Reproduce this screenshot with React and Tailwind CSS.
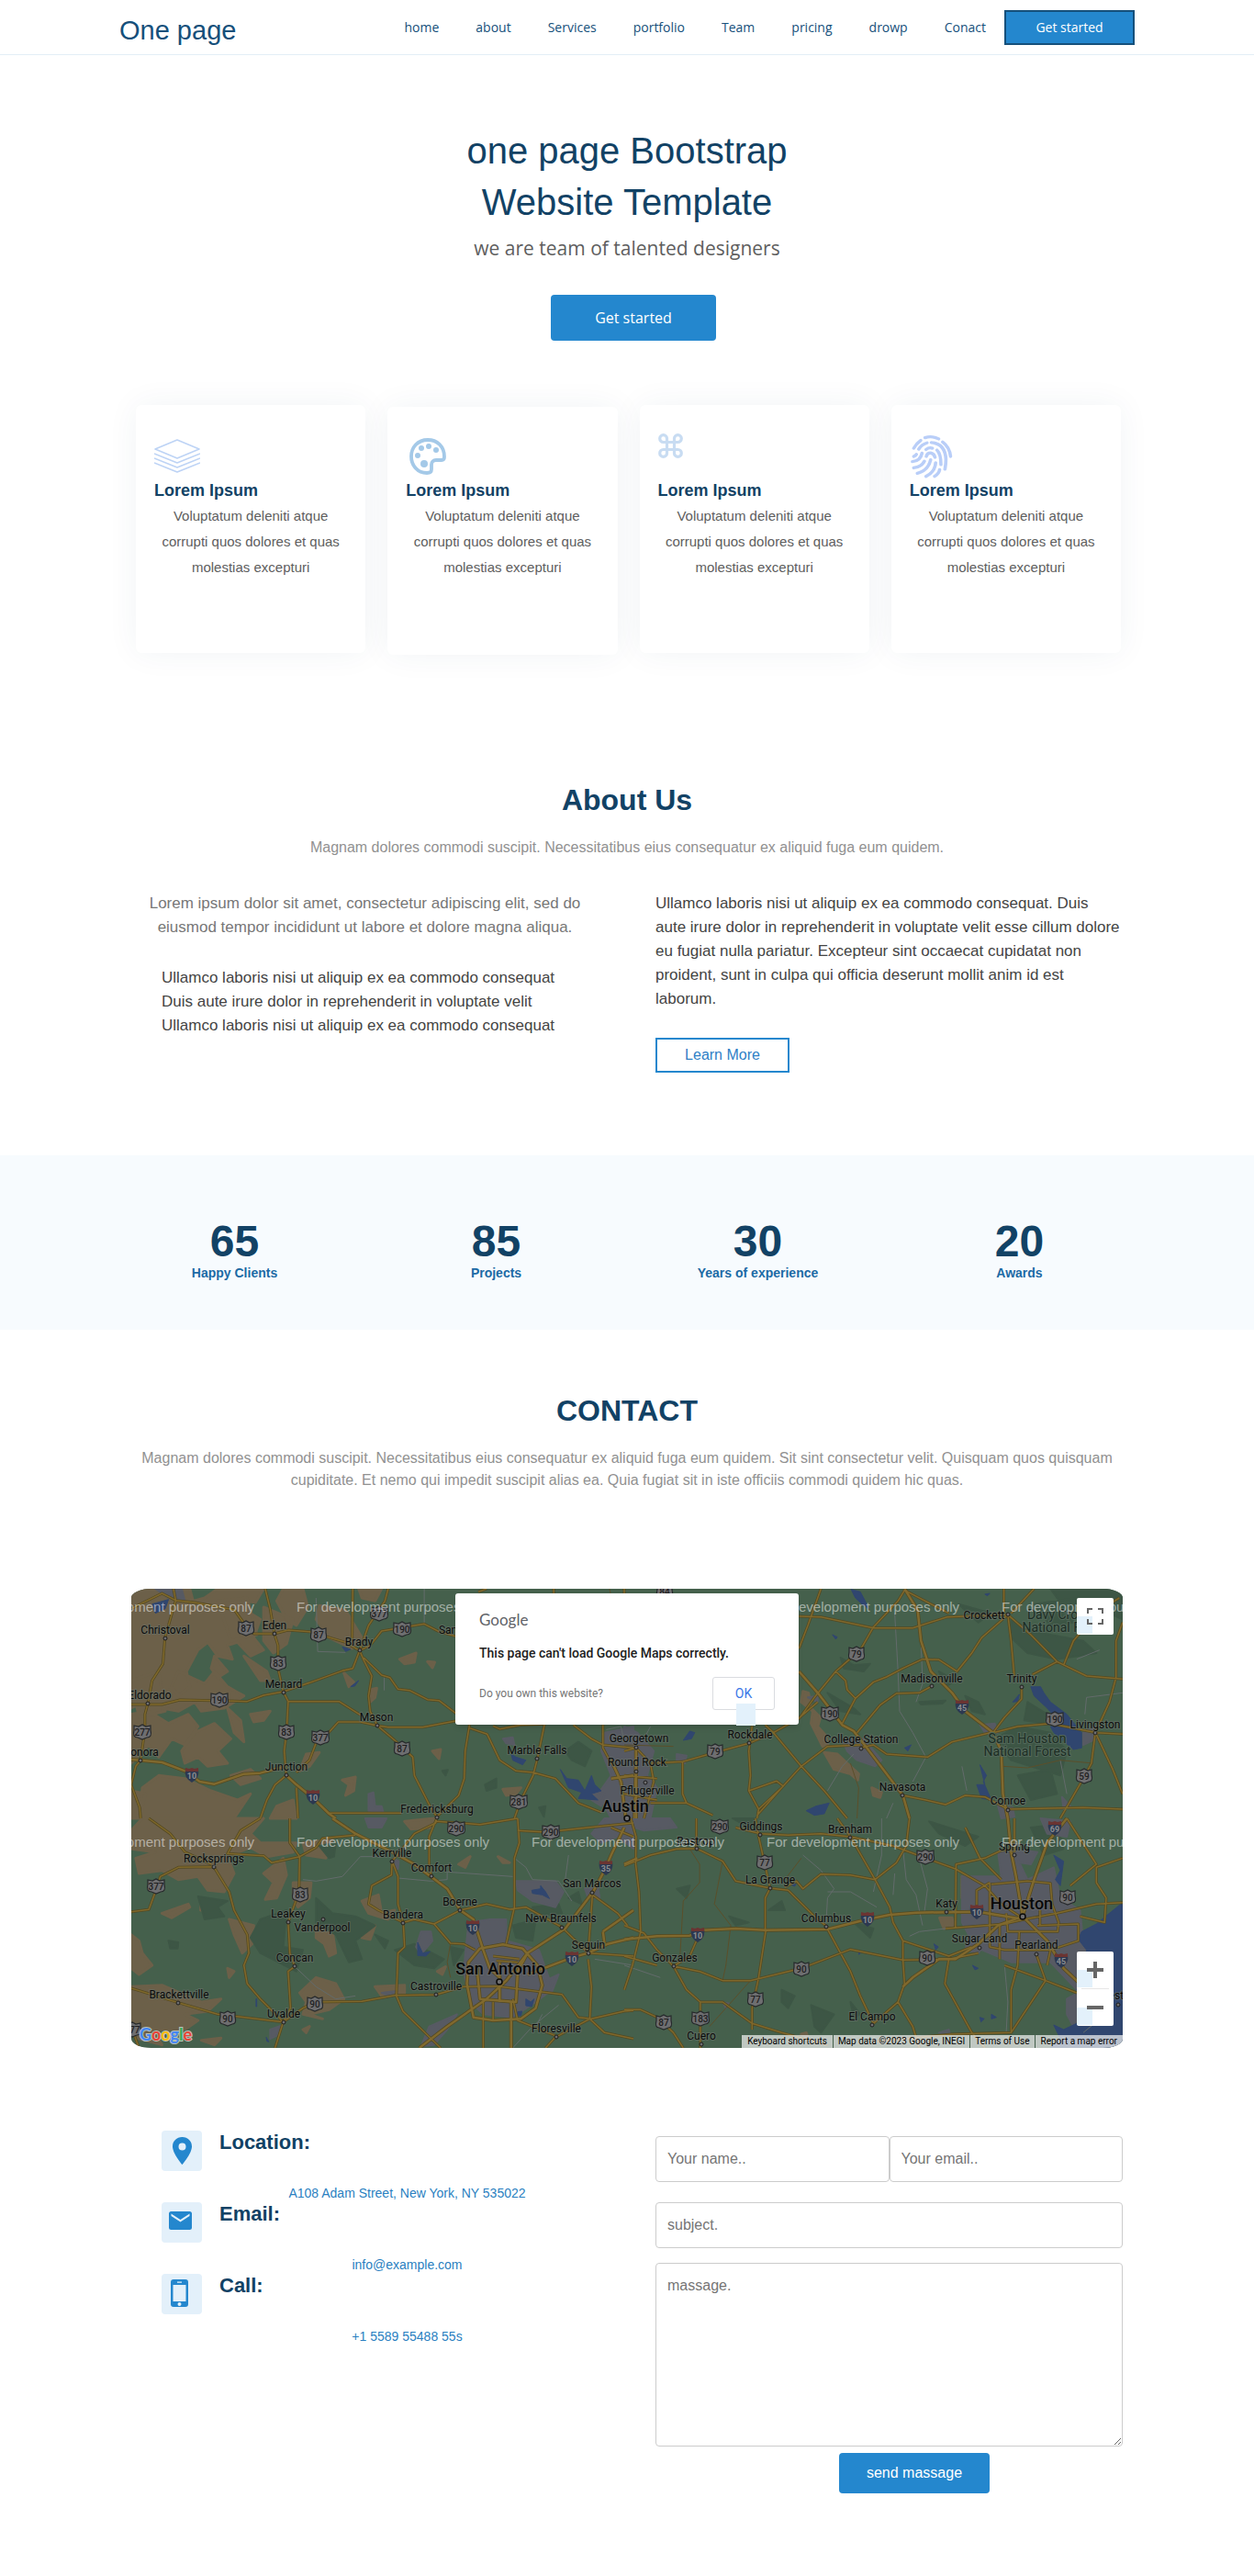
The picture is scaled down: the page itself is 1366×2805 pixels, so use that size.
import React from "react";

const NAV = ["home", "about", "Services", "portfolio", "Team", "pricing", "drowp", "Conact"];

function LayersIcon() {
  return (
    <svg width="50" height="37" viewBox="0 0 50 37" fill="none" stroke="#bdd3f5" strokeWidth="1.6" strokeLinejoin="round" aria-hidden="true">
      <path d="M25 1 L49 11 L25 21 L1 11 Z" />
      <path d="M0 16 L25 26 L50 16" />
      <path d="M0 21 L25 31 L50 21" />
      <path d="M0 26 L25 36 L50 26" />
    </svg>
  );
}

function PaletteIcon() {
  return (
    <svg width="40" height="40" viewBox="0 0 40 40" fill="none" aria-hidden="true">
      <path d="M20 2 C9 2 2 10 2 20 C2 30 9 38 19 38 C22.500 38 24 37 24 34 V29 C24 26 26 24 29 24 H35 C37 24 38 23 38 20.500 C38 9 30 2 20 2 Z" stroke="#a4c9e8" strokeWidth="3.800" strokeLinejoin="round" />
      <g fill="#a4c9e8">
        <circle cx="13" cy="11" r="3" />
        <circle cx="21" cy="9" r="3" />
        <circle cx="29" cy="13" r="3" />
        <circle cx="9" cy="19" r="3" />
        <circle cx="16" cy="28" r="4" />
      </g>
    </svg>
  );
}

function CommandIcon() {
  return (
    <svg width="27" height="27" viewBox="0 0 27 27" fill="none" stroke="#c8dcf2" strokeWidth="3.200" aria-hidden="true">
      <path d="M9.500 9.500 V5.600 A3.900 3.900 0 1 0 5.600 9.500 H21.400 A3.900 3.900 0 1 0 17.500 5.600 V21.400 A3.900 3.900 0 1 0 21.400 17.500 H5.600 A3.900 3.900 0 1 0 9.500 21.400 Z" />
    </svg>
  );
}

function FingerprintIcon() {
  return (
    <svg width="47" height="48" viewBox="870 156 130 146" preserveAspectRatio="none" fill="none" stroke="#b9cef8" strokeWidth="10" strokeLinecap="round" strokeLinejoin="round" aria-hidden="true">
      <path d="M916 167 Q938 160 957 171" />
      <path d="M882 202 Q890 186 903 176" />
      <path d="M969 181 Q990 198 993 229" />
      <path d="M897 205 Q906 189 922 184" />
      <path d="M935 183 Q976 186 979 238 Q979 256 976 271" />
      <path d="M882 229 Q888 226 890 222" />
      <path d="M878 246 Q902 245 907 218" />
      <path d="M919 206 Q929 198 938 202" />
      <path d="M952 208 Q964 220 964 256" />
      <path d="M920 229 Q922 217 933 217 Q943 219 946 232" />
      <path d="M882 267 Q906 263 914 245" />
      <path d="M893 285 Q926 275 933 240" />
      <path d="M919 295 Q946 281 948 250" />
      <path d="M945 295 Q958 286 960 273" />
    </svg>
  );
}

const FEATURES = [
  { icon: <LayersIcon />, box: "pt-[37px]", iconBox: "h-11" },
  { icon: <PaletteIcon />, box: "mt-0.5 pt-[34px]", iconBox: "h-[45px] pl-1" },
  { icon: <CommandIcon />, box: "pt-[31px]", iconBox: "h-[50px]" },
  { icon: <FingerprintIcon />, box: "pt-8", iconBox: "h-[49px]" },
];

const STATS = [
  ["65", "Happy Clients"],
  ["85", "Projects"],
  ["30", "Years of experience"],
  ["20", "Awards"],
];

/* Map drawing: four tiles, each with its own grid. */
const TILES = {
  nw: { x: -13, y: -10 },
  ne: { x: 537, y: -10 },
  sw: { x: -13, y: 250 },
  se: { x: 537, y: 250 },
};
const place = (tile, x, y) => [Math.round(TILES[tile].x + x / 2.8), Math.round(TILES[tile].y + y / 3)];

const TAN = {
  nw: "M36 30H215L225 70L260 60L300 30H440L415 75L390 70L400 110L430 130L410 190L440 230L400 250L360 205L330 215L345 260L300 250L270 205L240 230L205 300L215 350L180 380L160 350L130 400L110 380L36 420ZM500 30H560L575 90L540 150L510 130L480 70ZM440 90L530 130L510 210L470 240L440 200ZM610 85L690 100L740 190L710 225L640 190L600 130ZM730 30H800L780 70L740 60ZM180 300L260 340L290 300L330 350L380 380L320 420L250 430L230 400L180 430L130 420L150 370ZM290 250L330 300L300 320L280 290ZM36 440L90 430L150 470L210 440L240 480L200 540L160 520L120 580L90 540L36 600ZM230 500L290 470L340 520L300 560L330 600L270 610L240 580L200 600L190 560ZM330 420L370 460L380 530L350 500ZM400 440L460 430L440 460L410 465ZM120 640L200 650L280 690L360 720L400 700L350 780H60L70 680ZM36 690L80 700L60 780H36ZM480 740L530 720L540 780H460ZM570 570L610 565L580 610L550 625ZM680 655L720 645L715 690L690 705L700 670ZM685 305L715 335L700 350ZM855 260L905 240L900 270L870 275ZM940 268L962 270L955 288ZM955 560L980 555L975 585ZM1170 685L1225 680L1210 700L1180 705ZM765 360L785 355L780 385L765 400ZM380 250L450 300L460 330L430 330ZM340 640L400 620L430 650L370 670ZM36 330L120 300L140 430L60 450ZM300 70L390 60L420 180L340 200Z",
  ne: "M545 365L562 370L570 420L598 450L590 480L615 510L622 540L605 545L570 470L575 430L540 400ZM610 565L650 570L680 600L715 635L712 655L690 635L640 620ZM755 680L785 695L780 712L760 705Z",
  sw: "M70 0H440L400 50L430 80H540L530 110L450 125L400 95L330 125L350 180L320 240L270 235L240 190L180 200L130 170L60 180L50 130L110 110L36 100V40ZM440 180L500 130L510 185L480 260L445 265L470 210ZM530 210L585 210L580 260L545 290L530 260ZM130 310L210 280L215 290L160 325ZM250 275L265 270L260 300L248 300ZM335 330L410 350L405 410L375 440L350 380ZM600 350L650 370L660 440L640 450L625 410L600 390ZM730 350L780 350L765 395L740 390ZM740 270L790 250L800 310L840 300L820 330L760 310ZM36 380L60 400L70 440L100 480L60 510L36 490ZM36 550L130 545L250 600L310 590L270 630L200 640L240 660L200 690L100 690L130 740L60 720L36 700ZM550 570L600 520L660 540L685 590L640 625L580 640L620 655L560 640L570 600ZM330 490L350 500L335 520ZM560 690L580 680L570 700ZM780 550L870 545L870 570L800 580ZM970 500L995 485L985 510ZM1035 150L1070 125L1055 160ZM1155 125L1190 145L1170 145ZM870 10L960 0L950 30L890 35ZM560 80L650 70L630 130L570 120ZM250 725L310 718L290 740Z",
  se: "M1030 190L1060 210L1045 280L1030 260ZM1085 205L1130 250L1110 265ZM962 325L1000 325L1005 350L975 360ZM1365 400L1380 395L1378 420ZM540 705L555 700L560 715Z",
};

const FOREST = {
  nw: "M1360 560L1400 530L1440 560L1420 610L1380 590ZM985 625L1002 622L995 640ZM1280 745L1300 740L1295 775ZM1115 670L1150 650L1150 680L1120 690Z",
  ne: "M1180 130L1250 170L1400 200L1440 240L1320 260L1230 240L1180 190ZM1130 520L1200 480L1300 500L1350 560L1330 640L1240 610L1180 590ZM1250 80L1380 60L1370 140L1300 150ZM960 300L1010 330L980 350ZM660 255L700 280L750 275L730 300L670 290ZM900 400L980 395L970 405L905 408ZM1200 640L1300 620L1320 700L1240 720ZM1300 30H1520V130L1440 90L1340 90ZM1020 80L1120 110L1080 140ZM1040 380L1080 400L1100 440L1060 430ZM620 370L700 420L720 440L660 430ZM1230 400L1290 440L1280 470L1220 460Z",
  sw: "M240 255L330 270L300 290L320 320L260 330ZM430 330L510 300L500 420L560 430L540 500L430 440L400 390ZM600 260L650 310L720 320L780 350L720 400L740 460L700 470L660 380L600 340ZM150 400L180 405L178 425L155 425ZM780 380L820 400L810 425ZM840 430L900 410L990 460L960 490L900 480ZM1010 420L1050 430L1020 480ZM1200 350L1270 330L1260 400L1210 390ZM610 90L660 80L655 125L640 130ZM1370 260L1400 240L1410 280ZM1260 290L1340 280L1350 310L1270 320Z",
  se: "M700 340L760 360L750 390ZM480 560L520 580L500 620L480 600ZM570 610L640 640L600 700L580 680ZM160 230L200 220L190 260ZM330 0L400 0L380 30ZM930 10L1020 40L1080 60L1040 90L960 50ZM1240 30L1320 20L1340 100L1280 120ZM320 320L380 340L340 350ZM690 600L720 640L700 650ZM440 300L480 270L490 300Z",
};

const URBAN = {
  nw: "M110 30H190L200 70L150 60ZM1480 500L1568 480V780H1500L1460 700L1500 640L1470 560ZM760 700L775 695L780 740L800 740L805 760L760 755ZM1170 520L1200 515L1205 540L1180 535ZM1440 690L1480 700L1470 740L1440 720Z",
  ne: "M0 480L40 500L90 560L70 640L100 680L80 780H0ZM160 570L190 575L185 600L160 595ZM665 525L730 520L785 590L765 610L710 590L680 560ZM1085 475L1130 470L1140 500L1100 500ZM1400 500L1437 480L1440 520L1400 540ZM1140 740L1185 745L1190 775L1150 780ZM1335 710L1360 740L1340 750ZM560 385L590 380L590 400Z",
  sw: "M750 0H815L800 30H760ZM835 130L852 140L850 165L830 160ZM920 370L950 370L955 400L920 445L905 420ZM1065 340L1130 330L1180 330L1180 400L1280 430L1310 520L1320 560L1270 600L1200 650L1110 640L1070 600L1050 500ZM1210 205L1330 205L1355 240L1330 290L1260 270L1215 235ZM1440 50L1480 0H1568V100L1520 60L1470 80ZM1280 540L1340 510L1320 565L1290 560ZM460 690L500 675L480 710L460 720ZM800 570L840 565L830 582ZM945 680L1030 640L1000 690L960 740L920 745ZM1420 230L1460 225L1465 260L1430 260Z",
  se: "M0 0H140L160 30L60 40L0 20ZM1030 190L1150 190L1140 110L1190 110L1230 200L1310 160L1330 260L1390 300L1400 400L1440 480L1380 560L1300 470L1180 470L1070 420L1030 340ZM1050 390L1110 400L1080 440L1040 430ZM1180 100L1260 110L1240 150L1180 140ZM1350 590L1400 560L1390 640L1370 680L1350 640ZM300 600L320 605L310 620ZM960 700L990 690L995 710ZM1270 0L1360 10L1350 60L1290 50Z",
};

const WATER = {
  nw: "M100 80L150 65L140 95L110 110ZM680 220L705 228L690 235ZM705 350L730 330L718 348ZM1195 570L1210 580L1240 590L1230 605L1200 590ZM1345 620L1365 650L1400 655L1420 690L1440 640L1450 670L1470 690L1440 700L1460 720L1400 715L1410 695L1370 680Z",
  ne: "M692 32L720 40L735 70L745 95L725 80L705 60ZM635 180L650 188L645 195ZM180 525L200 495L215 500L205 520ZM1240 350L1270 350L1280 370L1300 400L1325 420L1350 440L1395 500L1395 550L1370 555L1310 500L1300 480L1340 480L1290 420L1250 380ZM1185 400L1205 375L1200 398ZM1085 605L1105 640L1095 660L1120 720L1090 715L1075 670L1100 670ZM555 755L585 740L625 730L610 765L580 770ZM855 550L875 540L865 560ZM1100 48L1115 45L1108 53Z",
  sw: "M910 405L925 440L948 435L935 450L910 448ZM1258 235L1285 230L1285 220L1300 240L1312 262L1290 250L1260 245ZM1240 590L1255 600L1265 590L1258 615L1240 612ZM1215 632L1228 630L1225 645L1215 645ZM417 590L419 590V615L417 615ZM448 715L456 730L450 728Z",
  se: "M1520 275L1480 310L1440 345L1395 370L1385 395L1410 430L1400 500L1380 560L1420 620L1440 660L1380 670L1340 690L1310 675L1330 720L1300 750H1520ZM1310 120L1340 140L1330 220L1315 200L1330 170ZM1062 480L1080 490L1070 495ZM1120 640L1135 650L1120 655ZM1085 650L1098 655L1088 665ZM945 410L958 420L950 430ZM505 215L525 210L520 222ZM715 435L722 437L716 445Z",
};

const ROADS = {
  nw: "M36 408H130L185 393L390 398L440 378L500 366M500 366L515 398H670L735 442M445 30L460 95L473 178L484 215V290L500 366M36 95L130 45L172 68L230 75L350 98L385 150L410 177H473L515 165L580 170L690 205L733 232M165 30L172 68L139 190L133 275L100 330L87 405L78 440V490L65 590M36 670L50 610L65 590M36 670L62 745L65 780M509 640L475 670L450 720L430 780M515 398L510 500L503 560L509 640M540 680L545 780M640 763H860M733 232L712 290L680 298L580 337L500 366M733 232L745 262L770 315L760 380L765 430L787 477M745 255L800 312L825 320L850 358L885 362L940 392L975 395L1030 440M712 30L710 200M820 30L810 70L760 150L733 232L765 215L800 168L930 145L975 170L1025 185M787 477L735 465H668L640 498L605 520L580 590L540 630M787 477L820 482H925L1025 462M787 477L840 525L895 580L900 640L945 735L968 775M1068 475L1055 560L1052 650L1035 705L968 775M1068 485L1122 505L1160 590L1210 625L1262 630L1330 650L1400 730L1470 760M1297 472L1275 585L1262 640L1225 720L1205 780M1140 478L1160 488L1225 475L1300 472M1385 475L1440 520L1475 540L1568 550M1475 475V550L1500 600M1095 40L1120 30M1325 30V45M1540 30V60",
  ne: "M855 35L835 70L760 155L720 230L645 300L580 385L533 455M533 120L600 122L760 158H880L985 122L1170 115M910 260L960 262L1015 300L1060 240L1090 190L1170 115M910 260L850 290L800 318L760 335L705 388M645 300L675 330L680 360L705 388L665 470M938 348L900 370L830 372L780 410L710 500M178 595L260 570L380 535L455 500L530 455L590 400M390 478L380 560L385 640L380 690L410 750L405 780M430 475L455 500L540 610L610 690L680 780M380 690L465 658L485 675L410 750M405 770L480 680L540 610L620 545L720 540M720 550L760 540L800 570L925 580L1000 530L1125 498M1125 500L1200 480L1300 470L1440 500L1520 505M1125 500L1160 450L1212 390V350M1170 115L1180 200L1190 320M1170 115L1240 180L1320 268L1410 315L1520 325M1245 310L1320 268M1340 280L1370 200L1450 100L1510 60M1520 140L1500 200L1500 320L1480 400L1437 500L1425 600L1400 650L1330 780M1437 500L1490 620L1520 700M1170 750L1400 745L1520 750M850 705L920 720L980 735L1040 705L1100 710L1170 750M0 640L100 650M36 550L80 600L178 595L178 700L190 730L270 770M80 730H190M36 550L30 780M80 600L90 660L60 780M533 225L560 150L600 30M1158 30V110M0 560L36 550M855 35L990 110M1250 30L1180 110M0 700L100 720",
  sw: "M36 555L180 602L300 640L500 665L560 620L600 600L740 598L840 578L966 576L1050 550L1150 548L1350 575M36 305L90 298L110 240L125 190L180 160L288 158M90 0L155 50L200 110L280 150M288 158L335 240L350 300L390 380L395 440L380 480L390 540L430 590L500 665M430 0L370 40L330 115L440 122L465 145L550 125L600 95L620 65L720 55M520 0V80L550 125L548 240L515 340L520 440L535 484L515 500L522 620L500 665L475 750M968 0L965 15L900 50L832 140M832 140L830 185L770 220L760 280L790 300L866 340L900 330L960 345L1040 300M832 140L850 190V280L866 340L870 420L850 440L845 580L865 630L980 750M968 0L945 60V150L952 190M968 10L1100 20L1215 0M1215 40L1300 45L1430 30L1568 15M1215 0L1220 80L1205 130L1205 290L1180 410M1040 300L1120 280L1190 297L1240 290L1349 355M960 345L1010 408L1050 410L1085 430M1200 590L1215 660L1330 710M1110 600V750M1140 600V660M1350 575L1400 650L1440 655L1540 630L1568 628M1430 460L1440 550L1435 655L1480 700L1568 720M1443 250L1430 440M1443 250L1520 310L1550 350M1140 450L1220 460M1150 465L1215 470M1349 355L1430 440L1568 450M1300 750L1330 715L1435 655M36 680L60 750M1568 60L1500 30",
  se: "M0 155L80 120L160 100L220 98L300 140L340 205L445 228L500 235L580 320L620 355M0 350L60 375L100 430L150 483M150 483L230 500L300 530H385L540 490L690 428L850 463L990 460M20 0L36 60L35 150L45 240L50 370L25 480L0 560M430 365V260L445 228L435 180L410 60L400 0M432 365L410 520L390 620V690M150 483L190 560L232 600H300L390 670L480 700L620 740M232 600V750M0 625H50L100 650L150 700L180 750M620 362L690 500L720 580L760 670M220 0V98M220 400L200 450L150 483M340 30L415 50L500 55L600 50L690 60L820 90L945 140L1010 165L1100 220L1150 280L1220 330M650 0L690 60L765 200L810 290L820 340L850 400V460L855 540L835 600L760 670M490 225L525 205L545 230L600 182L690 185L765 200L830 145L860 90L870 0M1120 215L1230 205L1300 212L1305 280L1325 340L1322 370H1170L1165 310M1010 360L1012 150L1100 130L1150 105L1190 100M1040 30L1085 130L1150 200M980 360L1160 345L1220 330L1320 310L1440 280L1520 275M1115 210V420L1160 430H1300L1385 400V345L1260 350M1205 370L1200 480L1180 560V700M1257 445L1285 530L1180 700L1000 705L760 730M990 460L978 540L1060 700L1100 750M990 460L1080 440M1160 480L1285 530L1380 570M1520 130L1440 160V210L1470 260L1465 340L1390 320M835 600L880 680L900 750M1350 0L1440 150L1360 220M1300 430L1290 480M1075 300V235L1115 210M1145 350V460M1268 300V350M1190 0V110M850 400L990 450L1060 420M0 450L100 480",
};

const HIGHWAYS = {
  nw: "M36 588L65 590L130 597L200 625L245 660L290 668L380 635L430 632L509 610M509 640L540 670L592 715L640 765L660 780M1500 590L1530 660L1545 780M1500 650L1568 640",
  ne: "M855 30L895 100L905 200L935 300L1000 370L1040 430L1125 500L1150 560L1155 700L1170 780M533 300L590 370L665 475L700 495L740 550L850 705L870 780M36 550V780",
  sw: "M650 0L720 50L832 110L900 150L950 190L1000 230L1040 300L1080 330L1110 430M1060 540L1065 470L1100 425L1170 412L1230 425L1275 480L1290 545L1270 620L1225 655L1140 660L1080 650ZM1110 430L1130 490L1160 520M1090 480L1100 590L1210 600L1215 500L1245 440M915 750L1000 680L1120 590L1180 530L1245 440L1360 360L1445 240L1480 170L1500 120L1540 30M1245 510L1380 455L1430 440L1490 410L1568 390M1195 600V750M1475 370L1568 300M1475 370L1480 410M1160 470V600",
  se: "M0 395L100 385L200 383L240 365L340 360L430 365L620 362L740 330L810 315L890 308L1080 305L1220 330M1170 0L1180 110L1195 190L1215 320L1290 400L1340 490L1390 540M1350 0L1290 80L1250 200L1215 320M850 550L880 520L960 460H1010L1080 410L1140 350L1215 320M0 150L40 130",
};

const LANES = {
  nw: "M600 60L605 235L690 238M930 30V145M808 320V362M1485 490L1530 480L1540 530",
  ne: "M825 110L835 300L840 430L880 500L920 580L880 660M905 200L910 340L890 400M1030 610L1045 690M1330 590L1350 700M1520 370L1410 385L1405 440M620 690L665 610L700 570M80 480L60 520M800 780L820 730M1380 260L1450 230",
  sw: "M560 200L600 205L680 190L735 125L800 125M850 195L950 205L1000 200V175L1200 190M535 484L600 550L660 590L720 580M1205 130L1240 160L1260 200L1340 205L1380 270M1200 750L1260 680L1340 610M1360 200L1370 120M1450 460L1568 480M1290 640L1260 700",
  se: "M545 120L600 170L640 230L620 260L615 355M620 240L690 240L770 290M785 0V120L760 240M850 100L860 200L890 250L910 350M900 130L925 230L915 310M870 385L900 370L980 360M820 250L825 180M1160 480L1170 600L1165 700M0 480L110 520M1480 630L1400 700",
};

const BYWAYS = {
  nw: "M1495 30L1510 100",
  ne: "M1155 610L1230 615L1330 590L1430 600M690 600L715 680L710 780M0 540L150 545",
  sw: "M1010 410L1000 470L1010 520",
  se: "M200 100L230 150V210L180 270L170 450M300 140L275 280L325 350L310 480L300 530M385 530L260 680M490 200L540 130",
};

const TOWNS = [
  ["nw", "Christoval", 139, 178, 139, 191], ["nw", "Eden", 474, 163, 473, 177], ["nw", "Brady", 731, 217, 733, 232],
  ["nw", "Menard", 502, 355, 501, 369], ["nw", "Eldorado", 92, 391, 87, 405], ["nw", "Mason", 785, 463, 787, 477],
  ["nw", "Sonora", 68, 577, 64, 591], ["nw", "Junction", 510, 625, 509, 640], ["nw", "Marble Falls", 1273, 571, 1274, 585],
  ["nw", "Fredericksburg", 968, 763, 968, 778], ["nw", "San Saba", 1045, 178, 1045, 190],
  ["ne", "Georgetown", 45, 532, 36, 549], ["ne", "Round Rock", 38, 610, 36, 627], ["ne", "Rockdale", 383, 520, 380, 535],
  ["ne", "Pflugerville", 70, 703, 64, 663], ["ne", "College Station", 723, 535, 722, 552], ["ne", "Madisonville", 937, 335, 938, 349],
  ["ne", "Crockett", 1098, 128, 1170, 115], ["ne", "Trinity", 1211, 337, 1212, 351], ["ne", "Livingston", 1435, 487, 1437, 500],
  ["ne", "Navasota", 847, 691, 849, 705], ["ne", "Conroe", 1170, 736, 1170, 753],
  ["sw", "Rocksprings", 288, 145, 288, 159], ["sw", "Kerrville", 832, 127, 832, 141], ["sw", "Comfort", 951, 175, 952, 189],
  ["sw", "Boerne", 1040, 286, 1038, 300], ["sw", "Leakey", 514, 325, 515, 339], ["sw", "Vanderpool", 620, 370, 621, 330],
  ["sw", "Bandera", 865, 328, 866, 342], ["sw", "Concan", 535, 469, 535, 484], ["sw", "Castroville", 966, 562, 966, 577],
  ["sw", "Brackettville", 181, 589, 179, 603], ["sw", "Uvalde", 501, 652, 501, 666], ["sw", "Floresville", 1332, 700, 1332, 715],
  ["sw", "San Marcos", 1443, 226, 1442, 243], ["sw", "New Braunfels", 1348, 340, 1349, 357], ["sw", "Seguin", 1430, 427, 1430, 441],
  ["se", "Giddings", 416, 40, 415, 54], ["se", "Bastrop", 219, 86, 221, 99], ["se", "Brenham", 688, 49, 689, 63],
  ["se", "La Grange", 445, 214, 445, 229], ["se", "Columbus", 615, 340, 616, 355], ["se", "Gonzales", 153, 469, 151, 483],
  ["se", "Cuero", 234, 724, 235, 738], ["se", "El Campo", 755, 661, 756, 675], ["se", "Katy", 982, 292, 982, 306],
  ["se", "Sugar Land", 1083, 406, 1083, 424], ["se", "Pearland", 1256, 427, 1257, 444], ["se", "Spring", 1190, 104, 1190, 121],
  ["se", "Galveston", 1488, 590, 1506, 610],
];

const CITIES = [
  ["ne", "Austin", 4, 758, 8, 780],
  ["sw", "San Antonio", 1162, 511, 1160, 533],
  ["se", "Houston", 1213, 298, 1214, 320],
];

const PARKS = [
  ["ne", "Davy Crockett", 1350, 130], ["ne", "National Forest", 1347, 172],
  ["ne", "Sam Houston", 1230, 535], ["ne", "National Forest", 1230, 577],
];

const SHIELDS = [
  ["nw", "87", 387, 160], ["nw", "87", 607, 180], ["nw", "377", 793, 110], ["nw", "190", 863, 162], ["nw", "83", 483, 274],
  ["nw", "190", 306, 392], ["nw", "277", 71, 497], ["nw", "83", 510, 497], ["nw", "377", 614, 516], ["nw", "87", 862, 551],
  ["nw", "281", 1219, 725], ["ne", "84", 122, 38], ["ne", "79", 707, 242], ["ne", "190", 628, 438], ["ne", "79", 278, 560],
  ["ne", "190", 1314, 455], ["ne", "59", 1404, 641], ["sw", "290", 1028, 32], ["sw", "290", 1317, 44], ["sw", "377", 113, 221],
  ["sw", "83", 552, 250], ["sw", "90", 597, 606], ["sw", "90", 329, 653], ["sw", "277", 40, 690], ["se", "290", 292, 26],
  ["se", "77", 427, 143], ["se", "290", 917, 126], ["se", "90", 1351, 258], ["se", "90", 541, 492], ["se", "90", 925, 456],
  ["se", "77", 399, 592], ["se", "87", 121, 667], ["se", "183", 231, 655],
];

const INTERSTATES = [
  ["nw", "10", 220, 640], ["nw", "10", 592, 712], ["ne", "45", 1029, 416], ["sw", "10", 1079, 358], ["sw", "35", 1483, 163],
  ["sw", "10", 1379, 458], ["se", "10", 223, 380], ["se", "10", 743, 331], ["se", "10", 1074, 307], ["se", "69", 1314, 34], ["se", "45", 1334, 466],
];

function Layer({ paths, ...style }) {
  return Object.entries(paths).map(([tile, d]) => (
    <g key={tile} transform={`translate(${TILES[tile].x} ${TILES[tile].y}) scale(0.35714 0.33333)`}>
      <path d={d} vectorEffect="non-scaling-stroke" strokeLinejoin="round" {...style} />
    </g>
  ));
}

function MapDrawing() {
  return (
    <svg className="absolute inset-0 h-full w-full font-[Roboto,sans-serif]" viewBox="0 0 1080 500" preserveAspectRatio="xMidYMid slice" role="img" aria-label="Map of central Texas">
      <rect width="1080" height="500" fill="#45604c" />
      <Layer paths={TAN} fill="#6c6049" stroke="#6c6049" strokeWidth="3" />
      <Layer paths={FOREST} fill="#3d5645" stroke="#3d5645" strokeWidth="2" />
      <Layer paths={URBAN} fill="#575a63" stroke="#575a63" strokeWidth="2" />
      <Layer paths={WATER} fill="#30466f" stroke="#30466f" strokeWidth="1" />
      <Layer paths={LANES} fill="none" stroke="#636b6b" strokeWidth="1" />
      <Layer paths={BYWAYS} fill="none" stroke="#5b4f2a" strokeWidth="1" />
      <Layer paths={ROADS} fill="none" stroke="#544920" strokeWidth="3" />
      <Layer paths={HIGHWAYS} fill="none" stroke="#544920" strokeWidth="4" />
      <Layer paths={ROADS} fill="none" stroke="#7f682c" strokeWidth="1.500" />
      <Layer paths={HIGHWAYS} fill="none" stroke="#80692e" strokeWidth="2.500" />

      {SHIELDS.map(([tile, text, x, y]) => {
        const [cx, cy] = place(tile, x, y);
        const w = text.length > 2 ? 10 : 9;
        return (
          <g key={tile + text + x}>
            <path d={`M${cx - w + 1} ${cy - 7} L${cx - 4} ${cy - 6} L${cx} ${cy - 8} L${cx + 4} ${cy - 6} L${cx + w - 1} ${cy - 7} L${cx + w - 1} ${cy - 2} Q${cx + w + 1} ${cy + 6} ${cx + 5} ${cy + 6} L${cx} ${cy + 8} L${cx - 5} ${cy + 6} Q${cx - w - 1} ${cy + 6} ${cx - w + 1} ${cy - 2} Z`} fill="#6e6e70" stroke="#26292b" strokeWidth="1.200" />
            <text x={cx} y={cy + 4} textAnchor="middle" fontSize="10" fontWeight="500" fill="#1f2021">{text}</text>
          </g>
        );
      })}
      {INTERSTATES.map(([tile, text, x, y]) => {
        const [cx, cy] = place(tile, x, y);
        return (
          <g key={tile + text + x}>
            <path d={`M${cx - 7} ${cy - 7} H${cx + 7} Q${cx + 9} ${cy + 3} ${cx} ${cy + 8} Q${cx - 9} ${cy + 3} ${cx - 7} ${cy - 7} Z`} fill="#2c3850" />
            <path d={`M${cx - 7} ${cy - 4} V${cy - 8} L${cx - 3} ${cy - 7} L${cx} ${cy - 8} L${cx + 3} ${cy - 7} L${cx + 7} ${cy - 8} V${cy - 4} Z`} fill="#6b3432" />
            <text x={cx} y={cy + 4} textAnchor="middle" fontSize="9" fontWeight="700" fill="#8b8d90">{text}</text>
          </g>
        );
      })}

      {PARKS.map(([tile, text, x, y]) => {
        const [px, py] = place(tile, x, y);
        return <text key={text + y} x={px} y={py} textAnchor="middle" fontSize="14" fill="#1c2d24" stroke="#53685a" strokeWidth="2" paintOrder="stroke">{text}</text>;
      })}
      {TOWNS.map(([tile, text, x, y, dx, dy]) => {
        const [px, py] = place(tile, x, y);
        const [cx, cy] = place(tile, dx, dy);
        return (
          <g key={text}>
            <circle cx={cx} cy={cy} r="2" fill="#6e6e70" stroke="#1d1d1d" />
            <text x={px} y={py} textAnchor="middle" fontSize="12" fill="#0b0b0b" stroke="#68716a" strokeOpacity="0.600" strokeWidth="2" paintOrder="stroke">{text}</text>
          </g>
        );
      })}
      {CITIES.map(([tile, text, x, y, dx, dy]) => {
        const [px, py] = place(tile, x, y);
        const [cx, cy] = place(tile, dx, dy);
        return (
          <g key={text}>
            <circle cx={cx} cy={cy} r="3" fill="#6e6e70" stroke="#0b0b0b" strokeWidth="1.500" />
            <text x={px} y={py} textAnchor="middle" fontSize="18" fontWeight="500" fill="#080808" stroke="#6e7070" strokeOpacity="0.600" strokeWidth="2" paintOrder="stroke">{text}</text>
          </g>
        );
      })}
      {[25, 281].map((y) =>
        [-76, 180, 436, 692, 948].map((x) => (
          <text key={`${x} ${y}`} x={x} y={y} fontSize="15" fill="#ffffff" fillOpacity="0.500" className="font-['Liberation_Sans',Arial,sans-serif]">
            For development purposes only
          </text>
        ))
      )}
      <text x="9" y="492" fontSize="18" fontWeight="700" stroke="#b9c2bb" strokeWidth="2" paintOrder="stroke" className="font-[Lato,sans-serif]">
        <tspan fill="#4285f4">G</tspan><tspan fill="#ea4335">o</tspan><tspan fill="#fbbc05">o</tspan><tspan fill="#4285f4">g</tspan><tspan fill="#34a853">l</tspan><tspan fill="#ea4335">e</tspan>
      </text>
    </svg>
  );
}

function MapPanel() {
  return (
    <div className="relative mx-auto h-[500px] w-full max-w-[1080px] overflow-hidden rounded-[2%] font-[Roboto,sans-serif]">
      <MapDrawing />
      <div className="absolute left-1/2 top-[5px] h-[143px] w-[374px] -translate-x-1/2 rounded-[3px] bg-white px-[26px] pt-[19px] shadow-md">
        <p className="font-[Lato,sans-serif] text-[17px] leading-5 text-[#5f6368]">Google</p>
        <p className="mt-4 text-sm font-medium leading-5 text-[#212121]">This page can't load Google Maps correctly.</p>
        <div className="mt-4 flex items-center justify-between">
          <a href="#map" className="text-xs text-[#757575]">Do you own this website?</a>
          <button type="button" className="relative h-9 w-[68px] rounded-[3px] border border-[#dadce0] text-sm text-[#3b78e7]">
            OK
            <span className="absolute left-[25px] top-7 h-6 w-[21px] bg-[#e3f1fb]" />
          </button>
        </div>
      </div>
      <button type="button" aria-label="Toggle fullscreen view" className="absolute right-2.5 top-2.5 grid h-10 w-10 place-items-center rounded-xs bg-white">
        <span className="absolute bottom-px left-0 h-[19px] w-[17px] bg-[#e3f1fb]" />
        <svg className="relative" width="18" height="18" viewBox="0 0 18 18" fill="none" stroke="#666" strokeWidth="2" aria-hidden="true">
          <path d="M1 6V1H6M12 1H17V6M17 12V17H12M6 17H1V12" />
        </svg>
      </button>
      <div className="absolute bottom-6 right-2.5 flex w-10 flex-col items-center rounded-xs bg-white">
        <button type="button" aria-label="Zoom in" className="relative grid h-10 w-10 place-items-center">
          <span className="absolute bottom-px left-0 h-[19px] w-[17px] bg-[#e3f1fb]" />
          <svg className="relative" width="18" height="18" viewBox="0 0 18 18" fill="#666" aria-hidden="true"><path d="M7 0H11V7H18V11H11V18H7V11H0V7H7Z" /></svg>
        </button>
        <span className="h-px w-[30px] bg-[#e6e6e6]" />
        <button type="button" aria-label="Zoom out" className="relative grid h-10 w-10 place-items-center">
          <span className="absolute bottom-px left-0 h-[19px] w-[17px] bg-[#e3f1fb]" />
          <svg className="relative" width="18" height="18" viewBox="0 0 18 18" fill="#666" aria-hidden="true"><path d="M0 7H18V11H0Z" /></svg>
        </button>
      </div>
      <div className="absolute bottom-0 right-0 flex h-3.5 gap-px text-[10px] leading-[14px] text-black">
        <button type="button" className="bg-[#f5f5f5]/70 px-1.5">Keyboard shortcuts</button>
        <span className="bg-[#f5f5f5]/70 px-[5px]">Map data ©2023 Google, INEGI</span>
        <a href="#terms" className="bg-[#f5f5f5]/70 px-[5px]">Terms of Use</a>
        <a href="#report" className="bg-[#f5f5f5]/70 px-1.5">Report a map error</a>
      </div>
    </div>
  );
}

const CONTACTS = [
  {
    title: "Location:", text: "A108 Adam Street, New York, NY 535022",
    icon: <path d="M22.500 7C16.500 7 12 11.300 12 17.200C12 25 22.500 37 22.500 37S33 25 33 17.200C33 11.300 28.500 7 22.500 7ZM22.500 13.500A4 4 0 1 1 22.500 21.500A4 4 0 1 1 22.500 13.500Z" />,
  },
  {
    title: "Email:", text: "info@example.com",
    icon: <path d="M10.500 10H30.500Q33 10 33 12.500V27.500Q33 30 30.500 30H10.500Q8 30 8 27.500V12.500Q8 10 10.500 10ZM10.500 12.500V15L20.500 21.500L30.500 15V12.500L20.500 19Z" />,
  },
  {
    title: "Call:", text: "+1 5589 55488 55s",
    icon: <path d="M13 6H26Q29 6 29 9V33Q29 36 26 36H13Q10 36 10 33V9Q10 6 13 6ZM12.500 12V30H26.500V12ZM17 8.500V9.700H22V8.500ZM19.500 31A2 2 0 1 1 19.500 35A2 2 0 1 1 19.500 31Z" />,
  },
];

const FIELD = "block w-full rounded-[4px] border border-[#ccc] bg-white px-3 text-base text-[#444] placeholder:text-[#757575] outline-none";

export default function App() {
  return (
    <div className="min-h-screen bg-white font-['Liberation_Sans',Arial,sans-serif] text-base text-[#444]">
      <header className="border-b border-[#e3eef6]">
        <div className="mx-auto flex min-h-[59px] max-w-[1106px] items-center justify-between">
          <a href="#home" className="pt-[7px] text-[29px] leading-9 text-[#16507b]">One page</a>
          <nav className="flex flex-wrap items-center font-['Open_Sans','Noto_Sans',sans-serif] text-sm text-[#16507b]">
            <div className="flex flex-wrap items-center gap-x-10 pr-5">
              {NAV.map((item) => (
                <a key={item} href={`#${item.toLowerCase()}`}>{item}</a>
              ))}
            </div>
            <a href="#about" className="flex h-[38px] w-[142px] items-center justify-center border-2 border-[#16507b] bg-[#2487ce] text-white">Get started</a>
          </nav>
        </div>
      </header>

      <main>
        <section id="home" className="mx-auto max-w-[1076px] pt-[76px] text-center">
          <h1 className="text-[40px] leading-[56px] text-[#124265]">one page Bootstrap<br />Website Template</h1>
          <p className="font-['Open_Sans','Noto_Sans',sans-serif] text-[21px] leading-[44px] text-[#5e5e5e]">we are team of talented designers</p>
          <a href="#about" className="ml-3.5 mt-[29px] inline-flex h-[50px] w-[180px] items-center justify-center rounded-[4px] bg-[#2487ce] align-top font-['Open_Sans','Noto_Sans',sans-serif] text-base text-white">Get started</a>

          <div id="services" className="ml-[3px] mt-[70px] grid grid-cols-4 gap-6 text-left">
            {FEATURES.map(({ icon, box, iconBox }, i) => (
              <article key={i} className={`h-[270px] rounded-[6px] bg-white px-5 shadow-[0_0_35px_rgba(18,66,101,0.06)] ${box}`}>
                <div className={iconBox}>{icon}</div>
                <h3 className="text-lg font-bold leading-6 text-[#124265]">Lorem Ipsum</h3>
                <p className="mt-0.5 text-center text-[15px] leading-7 text-[#5e5e5e]">Voluptatum deleniti atque corrupti quos dolores et quas molestias excepturi</p>
              </article>
            ))}
          </div>
        </section>

        <section id="about" className="mx-auto max-w-[1080px] pt-[138px]">
          <h2 className="text-center text-[32px] font-bold leading-10 text-[#124265]">About Us</h2>
          <p className="mt-5 text-center leading-6 text-[#919191]">Magnam dolores commodi suscipit. Necessitatibus eius consequatur ex aliquid fuga eum quidem.</p>
          <div className="mt-9 grid grid-cols-2 gap-[62px] text-[17px] leading-[26px]">
            <div>
              <p className="px-4 text-center text-[#777]">Lorem ipsum dolor sit amet, consectetur adipiscing elit, sed do eiusmod tempor incididunt ut labore et dolore magna aliqua.</p>
              <ul className="mt-[29px] pl-[33px]">
                <li>Ullamco laboris nisi ut aliquip ex ea commodo consequat</li>
                <li>Duis aute irure dolor in reprehenderit in voluptate velit</li>
                <li>Ullamco laboris nisi ut aliquip ex ea commodo consequat</li>
              </ul>
            </div>
            <div>
              <p className="pr-0.5">Ullamco laboris nisi ut aliquip ex ea commodo consequat. Duis aute irure dolor in reprehenderit in voluptate velit esse cillum dolore eu fugiat nulla pariatur. Excepteur sint occaecat cupidatat non proident, sunt in culpa qui officia deserunt mollit anim id est laborum.</p>
              <a href="#about" className="mt-[29px] flex h-[38px] w-[146px] items-center justify-center border-2 border-[#2487ce] text-base text-[#2f80c6]">Learn More</a>
            </div>
          </div>
        </section>

        <section className="mt-[90px] bg-[#f7fbfe] pb-[52px] pt-[70px]">
          <dl className="mx-auto grid max-w-[1140px] grid-cols-4 text-center font-bold">
            {STATS.map(([value, label]) => (
              <div key={label} className="flex flex-col-reverse">
                <dt className="text-sm leading-5 text-[#1c6aa5]">{label}</dt>
                <dd className="text-5xl leading-none text-[#124265]">{value}</dd>
              </div>
            ))}
          </dl>
        </section>

        <section id="conact" className="mx-auto max-w-[1080px] pb-[90px] pt-[68px]">
          <h2 className="text-center text-[32px] font-bold leading-10 text-[#124265]">CONTACT</h2>
          <p className="mb-[106px] mt-5 text-center leading-6 text-[#919191]">Magnam dolores commodi suscipit. Necessitatibus eius consequatur ex aliquid fuga eum quidem. Sit sint consectetur velit. Quisquam quos quisquam cupiditate. Et nemo qui impedit suscipit alias ea. Quia fugiat sit in iste officiis commodi quidem hic quas.</p>

          <MapPanel />

          <div className="mt-[90px] grid grid-cols-2 gap-[62px]">
            <address className="pl-[33px] pr-1 not-italic">
              {CONTACTS.map(({ title, text, icon }) => (
                <div key={title} className="flex gap-[19px]">
                  <svg className="shrink-0 rounded-[4px] bg-[#e3f0fa]" width="44" height="44" viewBox="0 0 44 44" fill="#2487ce" fillRule="evenodd" aria-hidden="true">{icon}</svg>
                  <div className="flex-1">
                    <h3 className="text-[22px] font-bold leading-[26px] text-[#124265]">{title}</h3>
                    <p className="mt-8 text-center text-sm leading-5 text-[#2a7fc1]">{text}</p>
                  </div>
                </div>
              ))}
            </address>
            <form className="pt-1.5" onSubmit={(e) => e.preventDefault()}>
              <div className="grid grid-cols-2">
                <input type="text" aria-label="Your name" placeholder="Your name.." className={`${FIELD} h-[50px]`} />
                <input type="email" aria-label="Your email" placeholder="Your email.." className={`${FIELD} h-[50px]`} />
              </div>
              <input type="text" aria-label="Subject" placeholder="subject." className={`${FIELD} mt-[22px] h-[50px]`} />
              <textarea aria-label="Message" placeholder="massage." className={`${FIELD} mt-4 h-[200px] resize py-3`} />
              <button type="submit" className="ml-[200px] mt-[7px] block h-11 w-[164px] rounded-[4px] bg-[#2487ce] text-base text-white">send massage</button>
            </form>
          </div>
        </section>
      </main>
    </div>
  );
}
